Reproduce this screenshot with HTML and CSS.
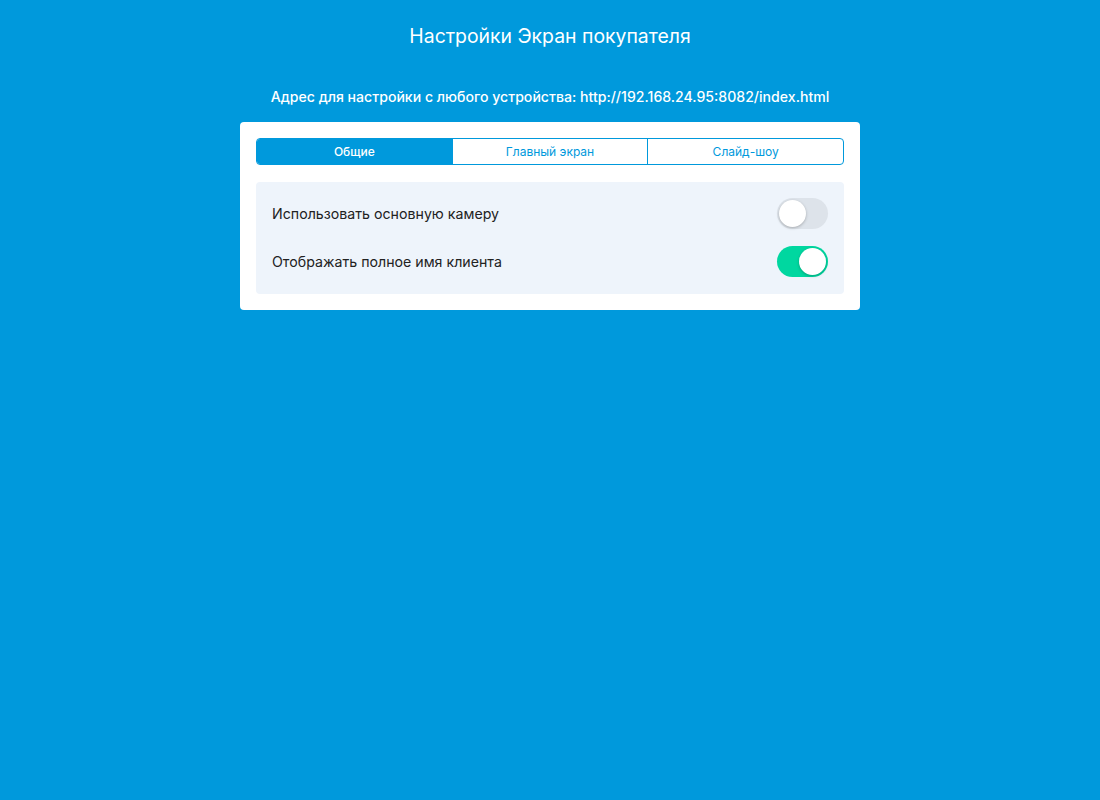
FILE: index.html
```html
<!DOCTYPE html>
<html lang="ru">
<head>
<meta charset="utf-8">
<title>Настройки Экран покупателя</title>
<link rel="stylesheet" href="styles.css">
</head>
<body>
<div class="page">
  <h1 class="title">Настройки Экран покупателя</h1>
  <div class="address">Адрес для настройки с любого устройства: http://192.168.24.95:8082/index.html</div>
  <div class="card">
    <div class="tabs">
      <div class="tab active">Общие</div>
      <div class="tab">Главный экран</div>
      <div class="tab">Слайд-шоу</div>
    </div>
    <div class="panel">
      <div class="row">
        <span class="label">Использовать основную камеру</span>
        <span class="toggle"><span class="knob"></span></span>
      </div>
      <div class="row">
        <span class="label">Отображать полное имя клиента</span>
        <span class="toggle on"><span class="knob"></span></span>
      </div>
    </div>
  </div>
</div>
</body>
</html>
```
FILE: styles.css
```css
html, body {
  margin: 0;
  padding: 0;
  height: 100%;
}
body {
  background: #0099dc;
  font-family: Inter, "Noto Sans", sans-serif;
  color: #fff;
}
.page {
  display: flex;
  flex-direction: column;
  align-items: center;
}
.title {
  margin: 24px 0 0;
  font-size: 19.4px;
  font-weight: 400;
  line-height: 24px;
  letter-spacing: 0;
}
.address {
  margin-top: 39px;
  font-size: 14.1px;
  font-weight: 500;
  line-height: 20px;
}
.card {
  margin-top: 15px;
  width: 620px;
  box-sizing: border-box;
  background: #fff;
  border-radius: 4px;
  padding: 16px;
  display: flex;
  flex-direction: column;
  gap: 17px;
}
.tabs {
  display: flex;
  border: 1px solid #0099dc;
  border-radius: 4px;
  overflow: hidden;
  height: 27px;
  box-sizing: border-box;
}
.tab {
  flex: 1;
  display: flex;
  align-items: center;
  justify-content: center;
  font-size: 12px;
  color: #0099dc;
  border-left: 1px solid #0099dc;
}
.tab:first-child {
  border-left: none;
}
.tab.active {
  background: #0099dc;
  color: #fff;
  font-weight: 500;
}
.panel {
  background: #eef4fb;
  border-radius: 4px;
  padding: 16px 16px 17px;
  display: flex;
  flex-direction: column;
  gap: 17px;
}
.row {
  display: flex;
  align-items: center;
  justify-content: space-between;
  height: 31px;
}
.label {
  font-size: 14.2px;
  color: #222;
}
.toggle {
  width: 51px;
  height: 31px;
  border-radius: 16px;
  background: #dde3ea;
  position: relative;
  box-sizing: border-box;
}
.toggle .knob {
  position: absolute;
  top: 2px;
  left: 2px;
  width: 27px;
  height: 27px;
  border-radius: 50%;
  background: #fff;
  box-shadow: 0 1px 3px rgba(0,0,0,0.25);
}
.toggle.on {
  background: #00d7a0;
}
.toggle.on .knob {
  left: 22px;
}
```
